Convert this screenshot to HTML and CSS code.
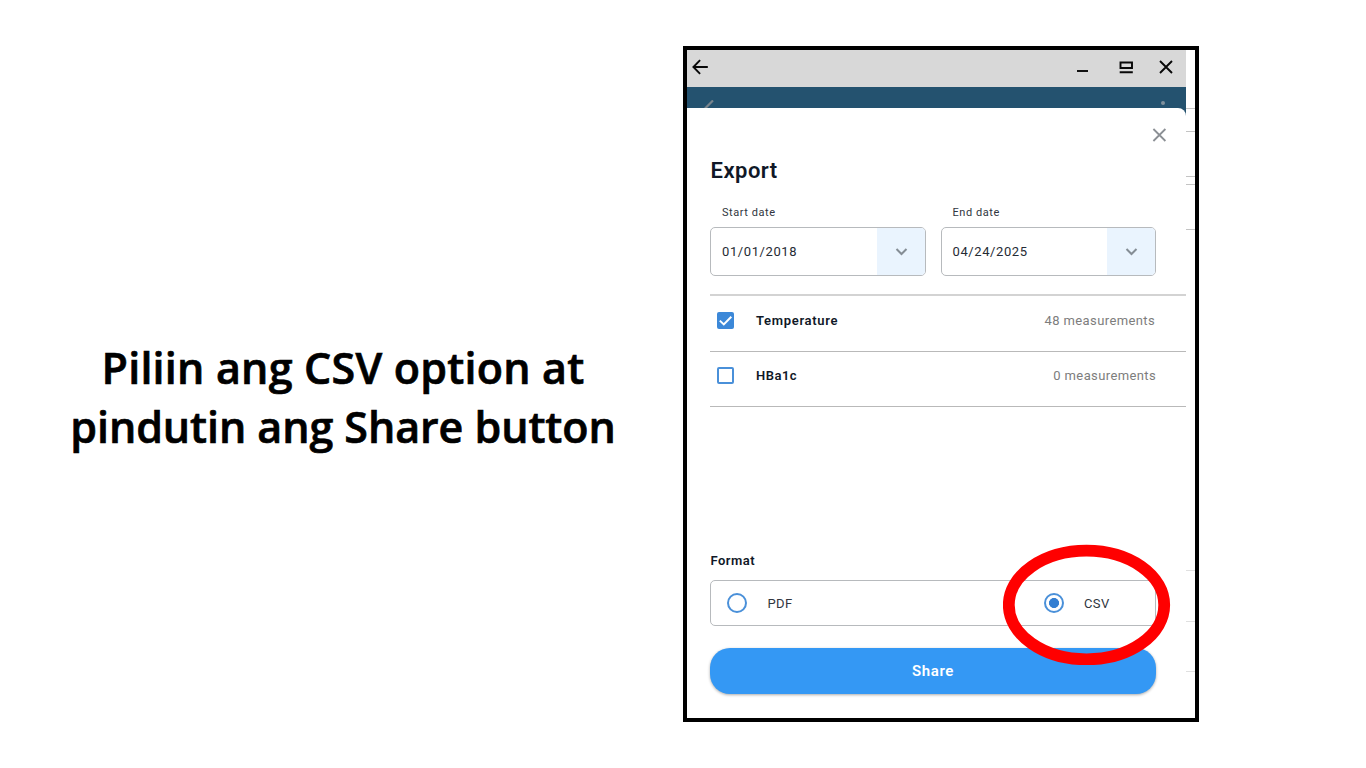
FILE: index.html
```html
<!DOCTYPE html>
<html lang="fil">
<head>
<meta charset="utf-8">
<title>Export</title>
<link rel="stylesheet" href="styles.css">
</head>
<body>
<main class="slide">
  <h1 class="headline"><span class="headline-first">Piliin ang CSV option at</span><br><span class="headline-second">pindutin ang Share button</span></h1>
  <section class="frame">
    <div class="app">
      <header class="titlebar">
        <svg class="back" width="18" height="18" viewBox="0 0 18 18"><path d="M16.8 9H2.5M9.1 2.2L2.4 9l6.7 6.8"/></svg>
        <svg class="controls" width="98" height="18" viewBox="0 0 98 18"><path d="M1 13h11" /><path d="M44.5 4.5h11.5v5.5h-11.5zM43.7 14.2h13.1"/><path d="M84 3l12 12M96 3L84 15"/></svg>
      </header>
      <div class="appbar">
        <svg width="12" height="8" viewBox="0 0 12 8"><path d="M10 0.5L2 8.5"/></svg>
        <i class="dot"></i>
      </div>
      <div class="sheet-back"><div class="sheet">
        <svg class="close" width="16" height="16" viewBox="0 0 16 16"><path d="M2.4 2l12 12M14.4 2L2.4 14"/></svg>
        <h2 class="title">Export</h2>
        <div class="dates">
          <div class="field">
            <span class="label">Start date</span>
            <div class="select"><span>01/01/2018</span><b class="drop"><svg width="14" height="10" viewBox="0 0 14 10"><path d="M2.5 2l5 5 5-5"/></svg></b></div>
          </div>
          <div class="field">
            <span class="label">End date</span>
            <div class="select"><span>04/24/2025</span><b class="drop"><svg width="14" height="10" viewBox="0 0 14 10"><path d="M2.5 2l5 5 5-5"/></svg></b></div>
          </div>
        </div>
        <div class="rows">
          <div class="row"><i class="check checked"><svg width="17" height="17" viewBox="0 0 17 17"><path d="M2.8 8.6l4 3.8 7.5-7.6"/></svg></i><strong class="temp">Temperature</strong><span class="count">48 measurements</span></div>
          <div class="row"><i class="check"></i><strong>HBa1c</strong><span class="count">0 measurements</span></div>
        </div>
        <h3 class="format">Format</h3>
        <div class="options">
          <i class="radio"></i><span class="pdf">PDF</span>
          <i class="radio selected"></i><span class="csv">CSV</span>
        </div>
        <button class="share">Share</button>
      </div></div>
    </div>
    <svg class="edge" width="9" height="668" viewBox="0 0 9 668"><path class="strong" d="M0 58.5h9M0 81.5h9M0 126.5h9M0 134.5h9M0 179.5h9"/><path class="faint" d="M0 520.5h9M0 571.5h9M0 621.5h9"/></svg>
    <svg class="highlight" width="168" height="121" viewBox="0 0 168 121"><ellipse cx="83.5" cy="61" rx="77.7" ry="54.3"/></svg>
  </section>
</main>
</body>
</html>
```
FILE: styles.css
```css
* { box-sizing: border-box; }
body { margin: 0; background: #fff; font-family: Roboto, sans-serif; }
svg { display: block; fill: none; flex: none; }
.slide { display: flex; width: 1366px; height: 768px; overflow: hidden; padding-top: 46px; }
.headline { margin: 292px 0 0; width: 683px; flex: none; padding-left: 3px; text-align: center; font: 600 43px/59px "Open Sans", sans-serif; color: #000; white-space: nowrap; -webkit-text-stroke: .7px #000; }
.headline-first { letter-spacing: .22px; }
.headline-second { letter-spacing: -.06px; }
.frame { position: relative; display: flex; width: 516px; height: 676px; flex: none; border: 4px solid #000; background: #fff; }
.app { width: 499px; }
.titlebar { display: flex; align-items: center; justify-content: space-between; height: 37px; padding: 0 12px 3px 4px; background: #d8d8d8; }
.titlebar svg { stroke: #080808; stroke-width: 1.9; }
.appbar { display: flex; justify-content: space-between; height: 21px; padding: 13px 21px 0 16px; background: #24526f; }
.appbar svg { stroke: #79848d; stroke-width: 2.2; }
.dot { width: 4px; height: 4px; margin-top: 1px; border-radius: 50%; background: #7f909c; }
.sheet-back { background: linear-gradient(#24526f 12px, #fff 12px); }
.sheet { display: flex; flex-direction: column; height: 610px; padding-left: 23px; border-top-right-radius: 8px; background: #fff; }
.close { margin: 19px 19px 0 auto; stroke: #8b8f94; stroke-width: 1.8; }
.title { margin: 15px 0 0; font-size: 22px; line-height: 26px; font-weight: 600; letter-spacing: .5px; padding-left: .5px; color: #101827; }
.dates { display: flex; gap: 15px; margin-top: 21px; width: 446px; }
.field { flex: 1; }
.label { display: block; height: 22px; padding-left: 12px; font-size: 11px; line-height: 15px; letter-spacing: .55px; color: #303640; }
.select { display: flex; align-items: center; justify-content: space-between; height: 49px; padding-left: 11px; border: 1px solid #b7babd; border-radius: 5px; overflow: hidden; font-size: 13px; letter-spacing: .6px; color: #252b34; }
.drop { display: flex; align-items: center; justify-content: center; width: 48px; height: 100%; background: #eaf4fe; }
.drop svg { stroke: #858d95; stroke-width: 2; }
.rows { margin-top: 18px; border-top: 2px solid #d3d3d3; }
.row { display: flex; align-items: center; height: 56px; padding: 0 31px 7px 7px; border-bottom: 1px solid #b9b9b9; font-size: 13px; letter-spacing: .5px; }
.row + .row { height: 55px; padding-right: 30px; padding-bottom: 8px; }
.row strong { margin-left: 22px; font-weight: 600; color: #101827; }
.row .temp { letter-spacing: .68px; }
.count { margin-left: auto; letter-spacing: .38px; color: #7d7d7d; }
.check { width: 17px; height: 17px; border: 2px solid #4a90d9; border-radius: 2px; }
.checked { border: 0; background: #3c88d8; }
.checked svg { stroke: #fff; stroke-width: 2; }
.format { margin: 146px 0 0; font-size: 13px; line-height: 16px; font-weight: 600; letter-spacing: .5px; padding-left: .5px; color: #101827; }
.options { display: flex; align-items: center; width: 446px; height: 46px; margin-top: 11px; padding-left: 16px; border: 1px solid #b7babd; border-radius: 5px; font-size: 13px; letter-spacing: .4px; color: #303640; }
.radio { width: 20px; height: 20px; border: 2px solid #4a90d9; border-radius: 50%; }
.selected { margin-left: auto; background: radial-gradient(circle, #347fd2 4.7px, #fff 5.3px); }
.pdf, .csv { margin: 1px 0 0 20px; }
.pdf { padding-left: .5px; }
.csv { width: 71px; }
.share { width: 446px; height: 46px; margin-top: 22px; border: 0; border-radius: 20px; background: #3498f4; box-shadow: 0 1px 3px #0005; font: 600 15px Roboto, sans-serif; letter-spacing: .6px; color: #fff; }
.edge path { stroke: #c4c4c4; }
.edge .faint { stroke: #e0e0e0; }
.highlight { position: absolute; left: 316px; top: 494px; }
.highlight ellipse { stroke: #f00; stroke-width: 11.8; }
```
